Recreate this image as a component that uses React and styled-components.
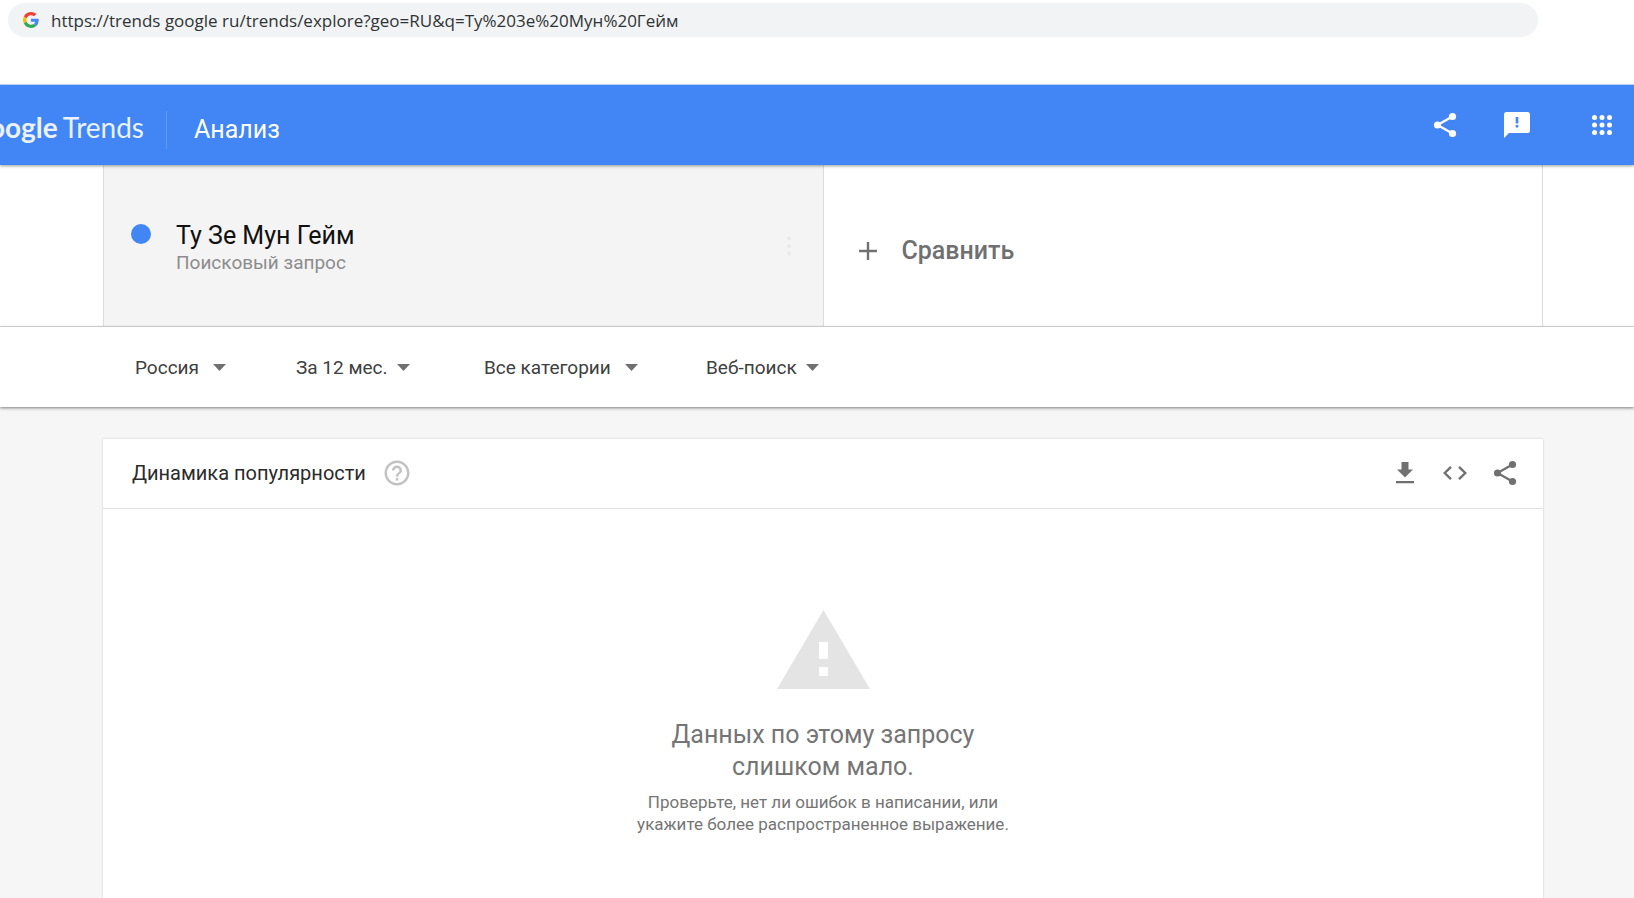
import React from "react";
import styled, { createGlobalStyle } from "styled-components";

const GlobalStyle = createGlobalStyle`
  * { box-sizing: border-box; }
  body { margin: 0; background: #f6f6f6; font-family: Roboto, "Liberation Sans", sans-serif; }
  h1, h2, h3, p { margin: 0; font-weight: 400; }
  button, input, select { font: inherit; color: inherit; border: 0; background: none; padding: 0; }
  svg { display: block; flex: none; }
`;

const Page = styled.div`
  display: flex;
  flex-direction: column;
  min-height: 100vh;
`;

const AddressArea = styled.div`
  background: #fff;
  padding: 3px 96px 48px 8px;
`;

const AddressBar = styled.label`
  display: flex;
  align-items: center;
  gap: 12px;
  height: 34px;
  padding: 0 15px;
  border-radius: 17px;
  background: #f1f3f4;
`;

const AddressInput = styled.input`
  flex: 1;
  min-width: 0;
  height: 34px;
  font-family: "Open Sans", sans-serif;
  font-size: 17px;
  color: #303336;
  outline: none;
`;

const Header = styled.header`
  position: relative;
  display: flex;
  align-items: center;
  justify-content: space-between;
  height: 80px;
  padding-right: 8px;
  background: #4285f4;
  color: #fff;
  box-shadow: 0 -1px 0 #b9cff3, 0 1px 3px rgba(0, 0, 0, 0.4);
`;

const Brand = styled.div`
  display: flex;
  align-items: baseline;
  padding-top: 6px;
`;

const Logo = styled.a`
  display: flex;
  align-items: baseline;
  justify-content: flex-end;
  gap: 5px;
  width: 144px;
  margin-right: 22px;
  overflow: clip;
  color: #eaf2ff;
  font-family: Lato, sans-serif;
  font-size: 28px;
  line-height: 38px;
  text-decoration: none;
`;

const LogoStrong = styled.span`
  font-weight: 700;
`;

const SectionTitle = styled.h1`
  padding-left: 27px;
  border-left: 1px solid #6198f5;
  font-size: 25px;
  line-height: 38px;
`;

const Actions = styled.div`
  display: flex;
  align-items: center;
  gap: ${(p) => p.$gap}px;
`;

const IconButton = styled.button`
  display: flex;
  align-items: center;
  justify-content: center;
  width: ${(p) => p.$width}px;
  height: 48px;
  margin-left: ${(p) => (p.$apart ? 13 : 0)}px;
  cursor: pointer;
`;

const Band = styled.section`
  padding: 0 91px 0 103px;
  background: #fff;
`;

const TermsBand = styled(Band)`
  border-bottom: 1px solid #dcdcdc;
`;

const Terms = styled.div`
  display: grid;
  grid-template-columns: 1fr 1fr;
  border-right: 1px solid #dcdcdc;
`;

const Term = styled.div`
  display: flex;
  align-items: center;
  justify-content: space-between;
  height: 161px;
  padding: 0 20px 0 27px;
  border-left: 1px solid #dcdcdc;
  background: #f4f4f4;
`;

const TermInfo = styled.div`
  display: flex;
  gap: 25px;
  padding-top: 2px;
`;

const TermDot = styled.span`
  width: 20px;
  height: 20px;
  margin-top: 4px;
  border-radius: 50%;
  background: #4285f4;
`;

const TermName = styled.h2`
  font-size: 25px;
  line-height: 32px;
  color: #111;
`;

const TermKind = styled.p`
  font-size: 19px;
  line-height: 22px;
  color: #8c8c8c;
`;

const CompareButton = styled.button`
  display: flex;
  align-items: center;
  gap: 25px;
  height: 161px;
  padding: 10px 0 0 35px;
  border-left: 1px solid #dcdcdc;
  color: #707070;
  font-size: 25px;
  font-weight: 500;
  cursor: pointer;
`;

const FilterBand = styled(Band)`
  position: relative;
  box-shadow: 0 1px 3px rgba(0, 0, 0, 0.5);
`;

const Filters = styled.div`
  display: flex;
  align-items: center;
  height: 80px;
  padding-left: 32px;
`;

const Filter = styled.label`
  display: flex;
  align-items: center;
  gap: ${(p) => (p.$wide ? 14 : 9)}px;
  width: ${(p) => p.$width}px;
  color: #707070;
`;

const FilterSelect = styled.select`
  appearance: none;
  height: 32px;
  outline: none;
  font-size: 19px;
  color: #404040;
  cursor: pointer;
`;

const Content = styled.main`
  flex: 1;
  display: flex;
  padding: 32px 91px 0 103px;
`;

const Card = styled.section`
  flex: 1;
  background: #fff;
  box-shadow: 0 0 2px rgba(0, 0, 0, 0.2);
`;

const CardHeader = styled.div`
  display: flex;
  align-items: center;
  justify-content: space-between;
  height: 70px;
  padding: 0 13px 2px 29px;
  border-bottom: 1px solid #e2e2e2;
  color: #707070;
`;

const CardHeading = styled.div`
  display: flex;
  align-items: center;
  gap: 6px;
`;

const CardTitle = styled.h2`
  font-size: 20px;
  line-height: 28px;
  color: #2b2b2b;
`;

const Empty = styled.div`
  display: flex;
  flex-direction: column;
  align-items: center;
  padding: 101px 24px 60px;
  text-align: center;
  color: #757575;
`;

const EmptyTitle = styled.h3`
  margin-top: 30px;
  font-size: 25px;
  line-height: 32px;
`;

const EmptyHint = styled.p`
  margin-top: 8px;
  font-size: 17px;
  line-height: 22px;
`;

const GoogleIcon = () => (
  <svg width="16" height="16" viewBox="0 0 48 48" aria-hidden="true">
    <path fill="#EA4335" d="M24 9.5c3.5 0 6.700 1.200 9.200 3.600l6.900-6.900C35.900 2.400 30.500 0 24 0 14.600 0 6.500 5.400 2.600 13.200l8 6.200C12.400 13.700 17.700 9.500 24 9.500z" />
    <path fill="#4285F4" d="M47 24.600c0-1.600-.2-3.100-.4-4.600H24v9h12.900c-.6 3-2.200 5.500-4.800 7.200l7.700 6C44.400 38 47 31.800 47 24.600z" />
    <path fill="#FBBC05" d="M10.500 28.600c-.5-1.500-.8-3-.8-4.600s.3-3.100.8-4.600l-8-6.200C.9 16.500 0 20.100 0 24s.9 7.500 2.600 10.800l7.900-6.200z" />
    <path fill="#34A853" d="M24 48c6.500 0 11.900-2.100 15.900-5.800l-7.700-6c-2.200 1.400-4.900 2.300-8.200 2.300-6.300 0-11.600-4.200-13.500-9.900l-8 6.200C6.500 42.600 14.600 48 24 48z" />
  </svg>
);

const ShareIcon = () => (
  <svg width="24" height="26" viewBox="0 0 24 26" fill="currentColor" aria-hidden="true">
    <path d="M19.500 4.500 4.500 13l15 8.500" fill="none" stroke="currentColor" strokeWidth="2.300" />
    <circle cx="19.500" cy="4.500" r="3.600" />
    <circle cx="4.500" cy="13" r="3.600" />
    <circle cx="19.500" cy="21.500" r="3.600" />
  </svg>
);

const FeedbackIcon = () => (
  <svg width="26" height="26" viewBox="0 0 26 26" aria-hidden="true">
    <path fill="currentColor" d="M2.500 0h21A2.500 2.500 0 0 1 26 2.500v16a2.500 2.500 0 0 1-2.500 2.500H5l-5 5V2.500A2.500 2.500 0 0 1 2.500 0z" />
    <path fill="#4285f4" d="M11.700 5h2.600v6.500h-2.600zM11.700 13h2.600v2.600h-2.600z" />
  </svg>
);

const AppsIcon = () => (
  <svg width="20" height="20" viewBox="0 0 20 20" fill="currentColor" aria-hidden="true">
    {[2.5, 10, 17.5].map((y) => [2.5, 10, 17.5].map((x) => <circle key={`${x}-${y}`} cx={x} cy={y} r="2.500" />))}
  </svg>
);

const MoreIcon = () => (
  <svg width="6" height="20" viewBox="0 0 6 20" fill="#e9e9e9" aria-hidden="true">
    <circle cx="3" cy="2.500" r="2" />
    <circle cx="3" cy="10" r="2" />
    <circle cx="3" cy="17.500" r="2" />
  </svg>
);

const PlusIcon = () => (
  <svg width="18" height="18" viewBox="0 0 18 18" aria-hidden="true">
    <path d="M9 0v18M0 9h18" stroke="currentColor" strokeWidth="2.400" />
  </svg>
);

const ArrowIcon = () => (
  <svg width="13" height="7" viewBox="0 0 13 7" aria-hidden="true">
    <path d="M0 0h13L6.500 7z" fill="currentColor" />
  </svg>
);

const HelpIcon = () => (
  <svg width="30" height="30" viewBox="0 0 24 24" fill="#c2c2c2" aria-hidden="true">
    <path d="M11 18h2v-2h-2v2zm1-16C6.480 2 2 6.480 2 12s4.480 10 10 10 10-4.480 10-10S17.520 2 12 2zm0 18c-4.410 0-8-3.590-8-8s3.590-8 8-8 8 3.590 8 8-3.590 8-8 8zm0-14c-2.210 0-4 1.790-4 4h2c0-1.100.9-2 2-2s2 .9 2 2c0 2-3 1.750-3 5h2c0-2.250 3-2.500 3-5 0-2.210-1.790-4-4-4z" />
  </svg>
);

const DownloadIcon = () => (
  <svg width="18" height="22" viewBox="0 0 18 22" fill="currentColor" aria-hidden="true">
    <path d="M5.500 0h7v7.500H17L9 15.500 1 7.500h4.500zM0 19h18v2.300H0z" />
  </svg>
);

const CodeIcon = () => (
  <svg width="24" height="14" viewBox="0 0 24 14" fill="none" stroke="currentColor" strokeWidth="2.400" aria-hidden="true">
    <path d="M8 .9 1.700 7 8 13.100M16 .9 22.300 7 16 13.100" />
  </svg>
);

const WarningIcon = () => (
  <svg width="93" height="79" viewBox="0 0 93 79" aria-hidden="true">
    <path d="M46.500 0 93 79H0z" fill="#e4e4e4" />
    <path d="M42 32h9v17h-9zM42 57h9v9h-9z" fill="#fff" />
  </svg>
);

const FILTERS = [
  { name: "Регион", value: "Россия", width: 161, wide: true },
  { name: "Период", value: "За 12 мес.", width: 188 },
  { name: "Категория", value: "Все категории", width: 222, wide: true },
  { name: "Тип поиска", value: "Веб-поиск", width: 160 },
];

export default function App() {
  return (
    <Page>
      <GlobalStyle />
      <AddressArea>
        <AddressBar>
          <GoogleIcon />
          <AddressInput
            type="text"
            aria-label="Адрес"
            defaultValue="https://trends google ru/trends/explore?geo=RU&q=Ту%203е%20Мун%20Гейм"
          />
        </AddressBar>
      </AddressArea>

      <Header>
        <Brand>
          <Logo href="#home">
            <LogoStrong>oogle</LogoStrong>
            <span>Trends</span>
          </Logo>
          <SectionTitle>Анализ</SectionTitle>
        </Brand>
        <Actions $gap={24}>
          <IconButton $width={48} aria-label="Поделиться"><ShareIcon /></IconButton>
          <IconButton $width={48} aria-label="Отзыв"><FeedbackIcon /></IconButton>
          <IconButton $width={48} $apart aria-label="Приложения"><AppsIcon /></IconButton>
        </Actions>
      </Header>

      <TermsBand>
        <Terms>
          <Term>
            <TermInfo>
              <TermDot />
              <div>
                <TermName>Ту Зе Мун Гейм</TermName>
                <TermKind>Поисковый запрос</TermKind>
              </div>
            </TermInfo>
            <IconButton $width={28} aria-label="Ещё"><MoreIcon /></IconButton>
          </Term>
          <CompareButton>
            <PlusIcon />
            Сравнить
          </CompareButton>
        </Terms>
      </TermsBand>

      <FilterBand>
        <Filters>
          {FILTERS.map((f) => (
            <Filter key={f.name} $width={f.width} $wide={f.wide}>
              <FilterSelect aria-label={f.name}>
                <option>{f.value}</option>
              </FilterSelect>
              <ArrowIcon />
            </Filter>
          ))}
        </Filters>
      </FilterBand>

      <Content>
        <Card>
          <CardHeader>
            <CardHeading>
              <CardTitle>Динамика популярности</CardTitle>
              <IconButton $width={50} aria-label="Справка"><HelpIcon /></IconButton>
            </CardHeading>
            <Actions $gap={0}>
              <IconButton $width={50} aria-label="Скачать"><DownloadIcon /></IconButton>
              <IconButton $width={50} aria-label="Код для вставки"><CodeIcon /></IconButton>
              <IconButton $width={50} aria-label="Поделиться"><ShareIcon /></IconButton>
            </Actions>
          </CardHeader>
          <Empty>
            <WarningIcon />
            <EmptyTitle>
              Данных по этому запросу<br />слишком мало.
            </EmptyTitle>
            <EmptyHint>
              Проверьте, нет ли ошибок в написании, или<br />укажите более распространенное выражение.
            </EmptyHint>
          </Empty>
        </Card>
      </Content>
    </Page>
  );
}
